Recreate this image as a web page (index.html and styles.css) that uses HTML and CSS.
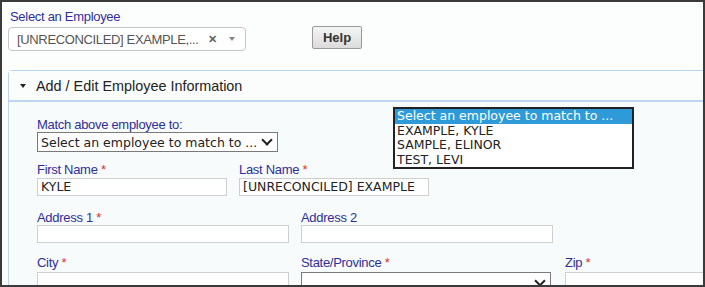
FILE: index.html
```html
<!DOCTYPE html>
<html>
<head>
<title>Employee</title>
<link rel="stylesheet" href="styles.css">
</head>
<body>
<div class="frame">
  <div class="top">
    <div class="lbl">Select an Employee</div>
    <div class="toprow">
      <div class="pick">
        <span class="pick-text">[UNRECONCILED] EXAMPLE,...</span>
        <span class="pick-x">&#x2715;</span>
        <span class="pick-arrow"></span>
      </div>
      <button class="help">Help</button>
    </div>
  </div>

  <div class="panel">
    <div class="panel-head"><span class="caret"></span>Add / Edit Employee Information</div>
    <div class="panel-body">
      <div class="lbl">Match above employee to:</div>
      <div class="sel sel-match"><span>Select an employee to match to ...</span><span class="chev"></span></div>

      <div class="row row-name">
        <div class="field">
          <div class="lbl">First Name <span class="req">*</span></div>
          <div class="inp">KYLE</div>
        </div>
        <div class="field">
          <div class="lbl">Last Name <span class="req">*</span></div>
          <div class="inp">[UNRECONCILED] EXAMPLE</div>
        </div>
      </div>

      <div class="row row-addr">
        <div class="field">
          <div class="lbl">Address 1 <span class="req">*</span></div>
          <div class="inp"></div>
        </div>
        <div class="field">
          <div class="lbl">Address 2</div>
          <div class="inp"></div>
        </div>
      </div>

      <div class="row row-city">
        <div class="field">
          <div class="lbl">City <span class="req">*</span></div>
          <div class="inp"></div>
        </div>
        <div class="field">
          <div class="lbl">State/Province <span class="req">*</span></div>
          <div class="sel sel-state"><span></span><span class="chev"></span></div>
        </div>
        <div class="field field-zip">
          <div class="lbl">Zip <span class="req">*</span></div>
          <div class="inp"></div>
        </div>
      </div>
    </div>
  </div>

  <ul class="droplist">
    <li class="on">Select an employee to match to ...</li>
    <li>EXAMPLE, KYLE</li>
    <li>SAMPLE, ELINOR</li>
    <li>TEST, LEVI</li>
  </ul>
</div>
</body>
</html>
```

FILE: styles.css
```css
/* employee match form */

body
{ margin: 0;
background-color: #ffffff;
}

div.frame
{ position: relative;
width: 701px;
height: 283px;
border: 2px solid #3a3a3a;
background-color: #fcfefe;
overflow: hidden;
font-family: "Liberation Sans", Arial, sans-serif;
}

div.lbl
{ font-size: 13px;
color: #2e2e9e;
line-height: 15px;
letter-spacing: -0.3px;
}

span.req
{ color: #e03030;
}

div.top
{ padding: 7px 0 0 6px;
}

div.top div.lbl
{ padding-left: 2px;
}

div.toprow
{ display: flex;
align-items: flex-start;
margin-top: 3px;
}

div.pick
{ display: flex;
align-items: center;
box-sizing: border-box;
width: 238px;
height: 24px;
border: 1px solid #c6c6c6;
border-radius: 4px;
background-color: #ffffff;
padding-left: 8px;
font-size: 13px;
color: #555555;
}

span.pick-text
{ flex: 1;
letter-spacing: -0.35px;
}

span.pick-x
{ font-size: 11px;
color: #666666;
font-weight: bold;
margin-right: 12px;
}

span.pick-arrow
{ width: 0;
height: 0;
border-left: 3px solid transparent;
border-right: 3px solid transparent;
border-top: 4px solid #888888;
margin-right: 10px;
}

button.help
{ margin-left: 66px;
margin-top: -1px;
width: 50px;
height: 23px;
border: 1px solid #9a9a9a;
border-radius: 2px;
background: linear-gradient(#f4f4f4, #dcdcdc);
font-family: "Liberation Sans", Arial, sans-serif;
font-size: 13px;
font-weight: bold;
color: #333333;
padding: 0;
}

div.panel
{ margin: 19px 0 0 6px;
width: 760px;
border: 1px solid #b9d6ef;
border-radius: 4px 0 0 0;
background-color: #f7fbfb;
}

div.panel-head
{ display: flex;
align-items: center;
height: 29px;
border-bottom: 2px solid #bcd8f0;
background-color: #fbfdfd;
font-size: 14.4px;
color: #222222;
padding-left: 11px;
}

span.caret
{ width: 0;
height: 0;
border-left: 3px solid transparent;
border-right: 3px solid transparent;
border-top: 4px solid #222222;
margin-right: 10px;
}

div.panel-body
{ padding: 15px 0 0 28px;
}

div.sel
{ display: flex;
align-items: center;
box-sizing: border-box;
height: 20px;
border: 1px solid #7a7a7a;
background-color: #ffffff;
font-family: "DejaVu Sans", Verdana, sans-serif;
font-size: 12.5px;
color: #222222;
padding-left: 3px;
}

div.sel span:first-child
{ flex: 1;
}

span.chev
{ width: 6px;
height: 6px;
border-right: 2px solid #222222;
border-bottom: 2px solid #222222;
transform: rotate(45deg);
margin: -5px 6px 0 0;
}

div.sel-match
{ width: 241px;
}

div.row
{ display: flex;
gap: 12px;
}

div.row div.field
{ flex-shrink: 0;
}

div.row div.inp
{ box-sizing: border-box;
height: 18px;
border: 1px solid #cfcfcf;
background-color: #ffffff;
font-family: "DejaVu Sans", Verdana, sans-serif;
font-size: 12.5px;
line-height: 16px;
color: #222222;
padding-left: 3px;
}

div.row-name
{ margin-top: 10px;
}

div.row-name div.lbl
{ margin-bottom: 1px;
}

div.row-name div.field
{ width: 190px;
}

div.row-addr
{ margin-top: 14px;
}

div.row-addr div.lbl
{ margin-bottom: 0;
}

div.row-city div.lbl
{ margin-bottom: 2px;
}

div.row-addr div.field, div.row-city div.field
{ width: 252px;
}

div.row-city
{ margin-top: 12px;
}

div.row-city div.sel-state
{ width: 250px;
height: 22px;
}

div.row-city div.inp
{ height: 22px;
}

ul.droplist
{ position: absolute;
left: 391px;
top: 105px;
width: 237px;
margin: 0;
padding: 0;
list-style: none;
border: 2px solid #222222;
background-color: #ffffff;
font-family: "DejaVu Sans", Verdana, sans-serif;
font-size: 12.5px;
color: #222222;
}

ul.droplist li
{ height: 14.5px;
line-height: 14.5px;
padding-left: 2px;
white-space: nowrap;
}

ul.droplist li.on
{ background-color: #2e9ad8;
color: #ffffff;
}
```
